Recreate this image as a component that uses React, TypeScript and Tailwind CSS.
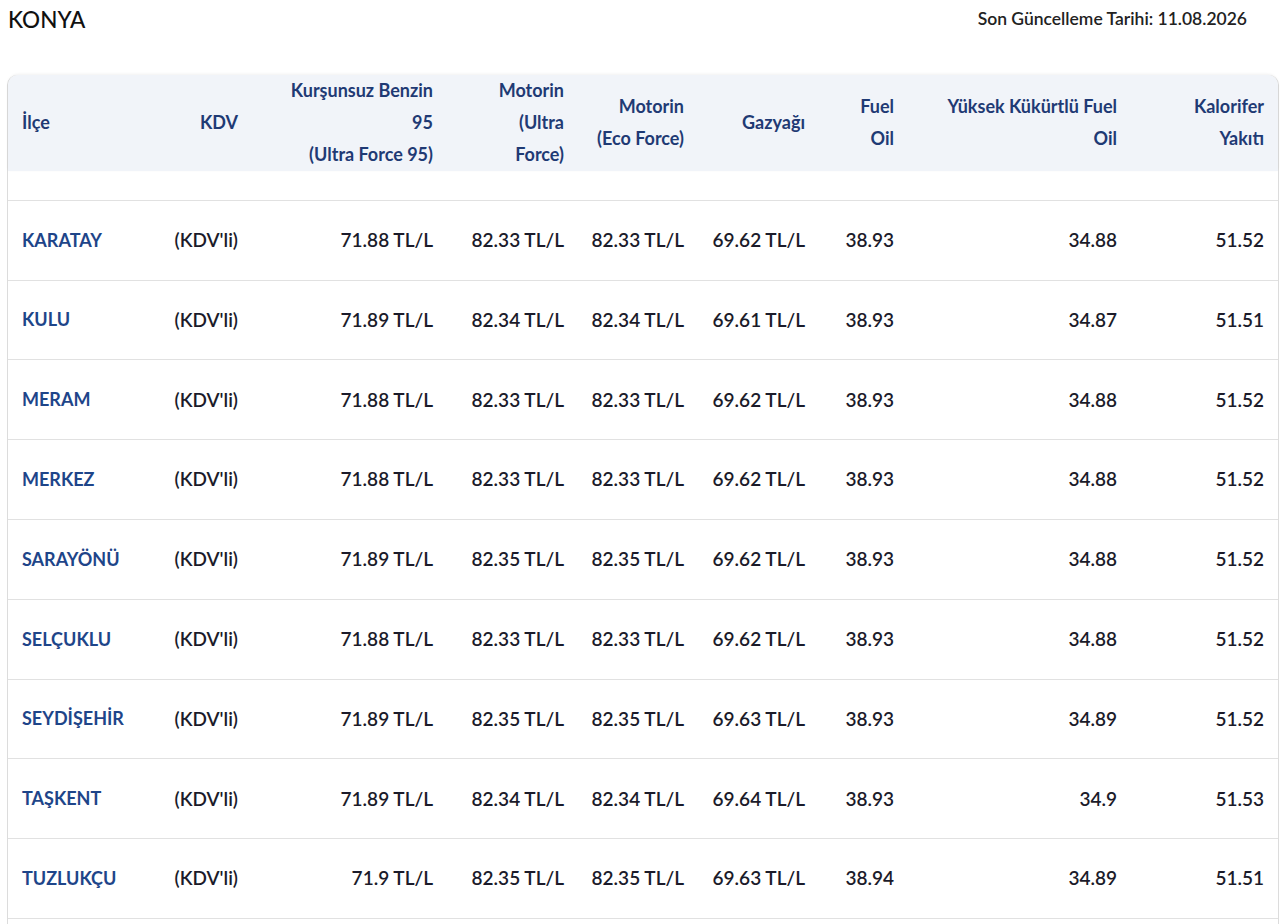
const cols = [
  "w-[150px] justify-start",
  "w-[94px] justify-end",
  "w-[195px] justify-end",
  "w-[131px] justify-end",
  "w-[120px] justify-end",
  "w-[121px] justify-end",
  "w-[89px] justify-end",
  "w-[223px] justify-end",
  "w-[147px] justify-end",
];

const headers: string[][] = [
  ["İlçe"],
  ["KDV"],
  ["Kurşunsuz Benzin", "95", "(Ultra Force 95)"],
  ["Motorin", "(Ultra", "Force)"],
  ["Motorin", "(Eco Force)"],
  ["Gazyağı"],
  ["Fuel", "Oil"],
  ["Yüksek Kükürtlü Fuel", "Oil"],
  ["Kalorifer", "Yakıtı"],
];

type Row = [string, string, string, string, string, string, string, string];

const rows: Row[] = [
  ["KARAPINAR", "71.89 TL/L", "82.34 TL/L", "82.34 TL/L", "69.62 TL/L", "38.93", "34.88", "51.52"],
  ["KARATAY", "71.88 TL/L", "82.33 TL/L", "82.33 TL/L", "69.62 TL/L", "38.93", "34.88", "51.52"],
  ["KULU", "71.89 TL/L", "82.34 TL/L", "82.34 TL/L", "69.61 TL/L", "38.93", "34.87", "51.51"],
  ["MERAM", "71.88 TL/L", "82.33 TL/L", "82.33 TL/L", "69.62 TL/L", "38.93", "34.88", "51.52"],
  ["MERKEZ", "71.88 TL/L", "82.33 TL/L", "82.33 TL/L", "69.62 TL/L", "38.93", "34.88", "51.52"],
  ["SARAYÖNÜ", "71.89 TL/L", "82.35 TL/L", "82.35 TL/L", "69.62 TL/L", "38.93", "34.88", "51.52"],
  ["SELÇUKLU", "71.88 TL/L", "82.33 TL/L", "82.33 TL/L", "69.62 TL/L", "38.93", "34.88", "51.52"],
  ["SEYDİŞEHİR", "71.89 TL/L", "82.35 TL/L", "82.35 TL/L", "69.63 TL/L", "38.93", "34.89", "51.52"],
  ["TAŞKENT", "71.89 TL/L", "82.34 TL/L", "82.34 TL/L", "69.64 TL/L", "38.93", "34.9", "51.53"],
  ["TUZLUKÇU", "71.9 TL/L", "82.35 TL/L", "82.35 TL/L", "69.63 TL/L", "38.94", "34.89", "51.51"],
  ["YALIHÜYÜK", "71.89 TL/L", "82.34 TL/L", "82.34 TL/L", "69.63 TL/L", "38.93", "34.89", "51.52"],
];

export default function App() {
  return (
    <div className="w-[1280px] h-[924px] overflow-hidden bg-white font-['Lato',sans-serif] flex flex-col">
      <div className="h-[75px] flex justify-between items-start shrink-0">
        <h1 className="pl-[8px] pt-[5px] text-[22.5px] leading-[30px] font-medium text-[#111]">KONYA</h1>
        <p className="pr-[33px] pt-[7px] text-[17.5px] leading-[24px] font-semibold text-[#222]">
          Son Güncelleme Tarihi: 11.08.2026
        </p>
      </div>

      <div className="ml-[7px] w-[1272px] flex-1 min-h-0 flex flex-col border-x border-[#dcdcdc] rounded-t-[10px]">
        <div className="flex h-[96px] shrink-0 bg-[#f1f4f9] rounded-t-[10px] shadow-[0_-1px_3px_rgba(0,0,0,0.06)] relative z-10">
          {headers.map((lines, i) => (
            <div key={i} className={`flex items-center px-[14px] -mt-[2px] ${cols[i]}`}>
              <div className={`text-[18px] leading-[32px] font-bold text-[#1f3a74] whitespace-nowrap ${i === 0 ? "text-left" : "text-right"}`}>
                {lines.map((l, j) => (
                  <div key={j}>{l}</div>
                ))}
              </div>
            </div>
          ))}
        </div>

        <div className="flex-1 min-h-0 overflow-hidden">
          <div className="-mt-[50px]">
            {rows.map((r) => (
              <div key={r[0]} className="flex h-[79.8px] border-b border-[#e1e1e1] text-[19px] font-semibold whitespace-nowrap">
                <div className={`flex items-center px-[14px] text-[18px] font-bold text-[#1e4589] ${cols[0]}`}>{r[0]}</div>
                <div className={`flex items-center px-[14px] text-[#1b1b2a] ${cols[1]}`}>(KDV'li)</div>
                {r.slice(1).map((v, j) => (
                  <div key={j} className={`flex items-center px-[14px] text-[#1b1b2a] ${cols[j + 2]}`}>{v}</div>
                ))}
              </div>
            ))}
          </div>
        </div>
      </div>
    </div>
  );
}
